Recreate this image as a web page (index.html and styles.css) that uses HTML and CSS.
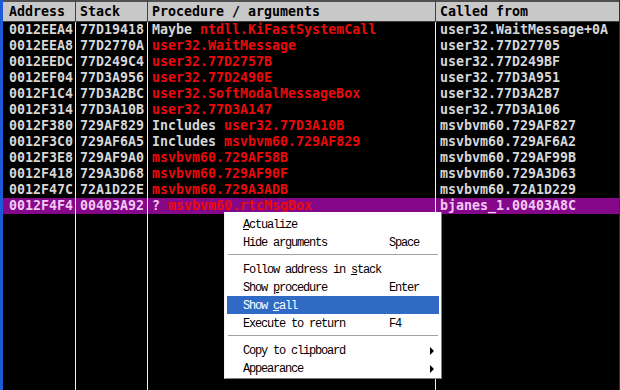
FILE: index.html
```html
<!DOCTYPE html>
<html lang="en">
<head>
  <meta charset="UTF-8" />
  <title>Call stack</title>
  <link rel="stylesheet" href="styles.css">
</head>
<body>

  <div class="stack-view">
    <div class="col col-addr">
      <div class="head">Address</div>
      <div class="cell">0012EEA4</div>
      <div class="cell">0012EEA8</div>
      <div class="cell">0012EEDC</div>
      <div class="cell">0012EF04</div>
      <div class="cell">0012F1C4</div>
      <div class="cell">0012F314</div>
      <div class="cell">0012F380</div>
      <div class="cell">0012F3C0</div>
      <div class="cell">0012F3E8</div>
      <div class="cell">0012F418</div>
      <div class="cell">0012F47C</div>
      <div class="cell sel">0012F4F4</div>
    </div>
    <div class="col col-stack">
      <div class="head">Stack</div>
      <div class="cell">77D19418</div>
      <div class="cell">77D2770A</div>
      <div class="cell">77D249C4</div>
      <div class="cell">77D3A956</div>
      <div class="cell">77D3A2BC</div>
      <div class="cell">77D3A10B</div>
      <div class="cell">729AF829</div>
      <div class="cell">729AF6A5</div>
      <div class="cell">729AF9A0</div>
      <div class="cell">729A3D68</div>
      <div class="cell">72A1D22E</div>
      <div class="cell sel">00403A92</div>
    </div>
    <div class="col col-proc">
      <div class="head">Procedure / arguments</div>
      <div class="cell">Maybe <span class="red">ntdll.KiFastSystemCall</span></div>
      <div class="cell"><span class="red">user32.WaitMessage</span></div>
      <div class="cell"><span class="red">user32.77D2757B</span></div>
      <div class="cell"><span class="red">user32.77D2490E</span></div>
      <div class="cell"><span class="red">user32.SoftModalMessageBox</span></div>
      <div class="cell"><span class="red">user32.77D3A147</span></div>
      <div class="cell">Includes <span class="red">user32.77D3A10B</span></div>
      <div class="cell">Includes <span class="red">msvbvm60.729AF829</span></div>
      <div class="cell"><span class="red">msvbvm60.729AF58B</span></div>
      <div class="cell"><span class="red">msvbvm60.729AF90F</span></div>
      <div class="cell"><span class="red">msvbvm60.729A3ADB</span></div>
      <div class="cell sel">? <span class="red">msvbvm60.rtcMsgBox</span></div>
    </div>
    <div class="col col-from">
      <div class="head">Called from</div>
      <div class="cell">user32.WaitMessage+0A</div>
      <div class="cell">user32.77D27705</div>
      <div class="cell">user32.77D249BF</div>
      <div class="cell">user32.77D3A951</div>
      <div class="cell">user32.77D3A2B7</div>
      <div class="cell">user32.77D3A106</div>
      <div class="cell">msvbvm60.729AF827</div>
      <div class="cell">msvbvm60.729AF6A2</div>
      <div class="cell">msvbvm60.729AF99B</div>
      <div class="cell">msvbvm60.729A3D63</div>
      <div class="cell">msvbvm60.72A1D229</div>
      <div class="cell sel">bjanes_1.00403A8C</div>
    </div>

    <div class="context-menu">
      <div class="item"><span class="label"><u>A</u>ctualize</span></div>
      <div class="item"><span class="label">Hide arguments</span><span class="key">Space</span></div>
      <div class="sep"></div>
      <div class="item"><span class="label">Follow address in <u>s</u>tack</span></div>
      <div class="item"><span class="label">Show <u>p</u>rocedure</span><span class="key">Enter</span></div>
      <div class="item active"><span class="label">Show <u>c</u>all</span></div>
      <div class="item"><span class="label">Execute to return</span><span class="key">F4</span></div>
      <div class="sep"></div>
      <div class="item"><span class="label">Copy to clipboard</span><span class="arrow"></span></div>
      <div class="item"><span class="label">Appearance</span><span class="arrow"></span></div>
    </div>
  </div>

</body>
</html>
```

FILE: styles.css
```css
body {
  margin: 0;
  background: #000;
  font-family: "DejaVu Sans Mono", monospace;
  font-size: 13.3px;
  font-weight: bold;
}
.stack-view {
  position: relative;
  display: flex;
  width: 616px;
  height: 390px;
  border-left: 3px solid #1c5ad8;
  border-right: 1px solid #303030;
  background: #000;
  overflow: hidden;
}
.col {
  display: flex;
  flex-direction: column;
  border-right: 1px solid #f0f0f0;
}
.col-addr { width: 72px; }
.col-stack { width: 71px; }
.col-proc { width: 287px; }
.col-from { flex: 1; border-right: none; }
.head {
  height: 19px;
  line-height: 19px;
  padding-left: 4px;
  background: #c8c8c8;
  color: #000;
  border-top: 2px solid #505050;
  border-bottom: 1px solid #404040;
  box-shadow: 1px 0 0 #404040;
  white-space: nowrap;
}
.col-addr .head,
.col-addr .cell { padding-left: 6px; }
.cell {
  height: 16px;
  line-height: 16px;
  padding-left: 4px;
  color: #d6d6d6;
  white-space: nowrap;
}
.red { color: #ea0a0a; }
.cell.sel {
  background: #85088a;
  color: #f4c8f4;
}
.context-menu {
  position: absolute;
  left: 221px;
  top: 212px;
  width: 212px;
  padding: 3px 2px 1px 2px;
  background: #fff;
  border: 1px solid #f4f4f4;
  border-top: none;
  border-right-color: #808080;
  border-bottom-color: #808080;
  font-family: "Liberation Mono", monospace;
  font-size: 12px;
  font-weight: normal;
  letter-spacing: -1.2px;
  color: #000;
}
.item {
  display: flex;
  align-items: center;
  height: 17px;
  padding-top: 1px;
  padding-left: 16px;
}
.item .label { width: 146px; }
.item.active {
  background: #316ac5;
  color: #fff;
}
.arrow {
  margin-left: 41px;
  width: 0;
  height: 0;
  border-top: 4px solid transparent;
  border-bottom: 4px solid transparent;
  border-left: 4px solid #000;
}
.sep {
  height: 0;
  margin: 3px 1px 4px;
  border-top: 1px solid #a0a0a0;
  border-bottom: 1px solid #fff;
}
```
